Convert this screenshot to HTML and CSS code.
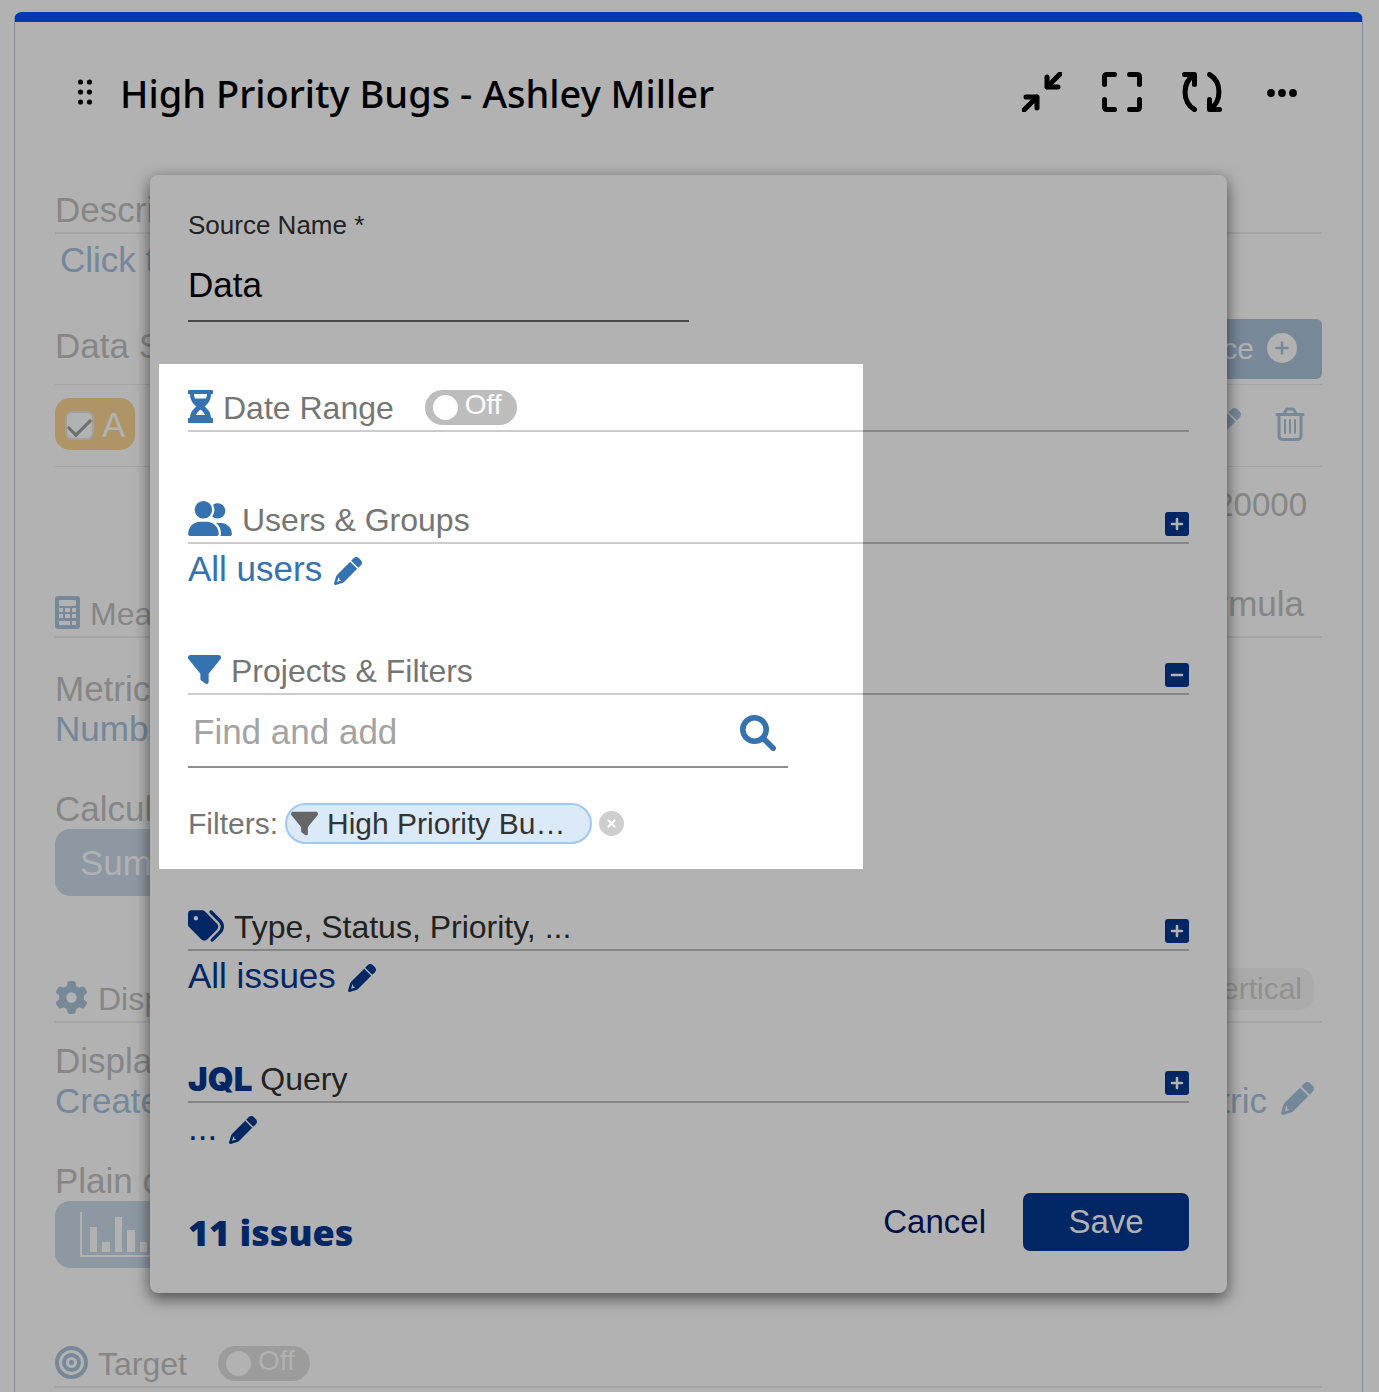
FILE: index.html
```html
<!DOCTYPE html>
<html lang="en">
<head>
<meta charset="utf-8">
<meta name="viewport" content="width=device-width, initial-scale=1">
<title>High Priority Bugs - Ashley Miller</title>
<link rel="stylesheet" href="styles.css">
</head>
<body>
<svg class="sprite" aria-hidden="true">
  <symbol id="pencil" viewBox="0 0 512 512"><path d="M424 216 296 88 58.600 322.900c-10.400 10.400-18 23.300-22.200 37.400L1 480.700c-2.500 8.400-.2 17.500 6.100 23.700s15.300 8.500 23.700 6.100l120.300-35.400c14.100-4.200 27-11.800 37.400-22.200zM132 424l-14 12-54 16-6-6 20-62 14-18 4 44q2 8 10 8zM362.700 18.700 314 67l131 131 48-48.700c25-25 25-65.500 0-90.500l-39.700-40.100c-25-25-65.500-25-90.600 0z"/></symbol>
  <symbol id="filter" viewBox="0 0 512 512"><path d="M3.900 54.900C10.500 40.900 24.500 32 40 32H472c15.500 0 29.500 8.900 36.100 22.900s4.600 30.500-5.200 42.500L320 320.900V448c0 12.100-6.800 23.200-17.700 28.600s-23.800 4.300-33.500-3l-64-48c-8.100-6-12.800-15.500-12.800-25.600V320.900L9 97.300C-.7 85.400-2.800 68.800 3.900 54.900z"/></symbol>
  <symbol id="plus" viewBox="0 0 24 24"><rect width="24" height="24" rx="3"/><path d="M12 7v10M7 12h10" stroke="#b2b2b2" stroke-width="2.600" stroke-linecap="round"/></symbol>
  <symbol id="minus" viewBox="0 0 24 24"><rect width="24" height="24" rx="3"/><path d="M7 12h10" stroke="#b2b2b2" stroke-width="2.600" stroke-linecap="round"/></symbol>
</svg>

<main class="card">
  <header class="card-header">
    <svg class="grip" viewBox="0 0 18 28" aria-hidden="true"><circle cx="5.500" cy="4" r="2.600"/><circle cx="14.500" cy="4" r="2.600"/><circle cx="5.500" cy="14" r="2.600"/><circle cx="14.500" cy="14" r="2.600"/><circle cx="5.500" cy="24" r="2.600"/><circle cx="14.500" cy="24" r="2.600"/></svg>
    <h1>High Priority Bugs - Ashley Miller</h1>
    <div class="tools">
      <button aria-label="Collapse"><svg viewBox="0 0 40 40" class="line"><path d="M38 2 25 15M25 5v10h11M2 38l13-13M4 25h11v11"/></svg></button>
      <button aria-label="Full screen"><svg viewBox="0 0 40 40" class="line"><path d="M2.500 12.500V5q0-2.500 2.500-2.500h7.500M27.500 2.500H35q2.500 0 2.500 2.500v7.500M2.500 27.500V35q0 2.500 2.500 2.500h7.500M27.500 37.500H35q2.500 0 2.500-2.500v-7.500"/></svg></button>
      <button aria-label="Refresh"><svg viewBox="0 0 40 40" class="line"><path d="M2.500 2.500h10v10M12 3C.500 10-.500 30 12.500 37.500M27.500 2.500C40.500 10 39.500 30 28 37M27.500 27.500v10h10"/></svg></button>
      <button aria-label="More"><svg viewBox="0 0 40 40"><circle cx="9" cy="21" r="3.900"/><circle cx="20" cy="21" r="3.900"/><circle cx="31" cy="21" r="3.900"/></svg></button>
    </div>
  </header>

  <section class="description">
    <h2 class="heading large">Description</h2>
    <a class="link-row indent" href="#">Click to add</a>
  </section>

  <section class="sources">
    <div class="sources-head">
      <h2 class="large">Data Sources</h2>
      <button class="add">Add Source <svg viewBox="0 0 30 30" aria-hidden="true"><circle cx="15" cy="15" r="15" fill="#b2b2b2"/><path d="M15 9.500v11M9.500 15h11" stroke="#778899" stroke-width="2.500" stroke-linecap="round"/></svg></button>
    </div>
    <div class="source-row">
      <label class="source-chip"><input type="checkbox" checked>A</label>
      <div class="row-tools">
        <button aria-label="Edit source"><svg class="icon-32"><use href="#pencil"/></svg></button>
        <button aria-label="Delete source"><svg class="trash" viewBox="0 0 30 34"><path class="stroke" d="M2 7.500h26M4 8v20.500q0 4 4 4h14q4 0 4-4V8M9 7l2-4q.5-1 2-1h4q1.500 0 2 1l2 4"/><path class="stroke thin" d="M10 13v13M15 13v13M20 13v13"/></svg></button>
      </div>
    </div>
    <p class="limit">20000</p>
  </section>

  <section class="measure">
    <div class="heading">
      <svg class="calc" viewBox="0 0 25 33" aria-hidden="true"><path fill-rule="evenodd" d="M3 0h19q3 0 3 3v27q0 3-3 3H3q-3 0-3-3V3q0-3 3-3zM4 5v4q0 1 1 1h15q1 0 1-1V5q0-1-1-1H5q-1 0-1 1zM4 12v4h4v-4zm6 0v4h5v-4zm7 0v4h4v-4zM4 18v4h4v-4zm6 0v4h5v-4zm7 0v4h4v-4zM4 25v4h11v-4zm13 0v4h4v-4z"/></svg>
      <h2>Measure</h2><span class="formula">Formula</span>
    </div>
    <div class="fields">
      <div><p class="row">Metric</p><a class="row" href="#">Number</a></div>
      <div><p class="row">Calculation</p><button class="option">Sum</button></div>
    </div>
  </section>

  <section class="display">
    <div class="heading">
      <svg class="icon-33" viewBox="0 0 512 512" aria-hidden="true"><path d="M495.900 166.600c3.200 8.700 .5 18.400-6.400 24.600l-43.300 39.400c1.100 8.300 1.700 16.800 1.700 25.400s-.6 17.100-1.700 25.400l43.300 39.400c6.900 6.200 9.600 15.900 6.400 24.600c-4.400 11.900-9.700 23.300-15.800 34.300l-4.700 8.100c-6.600 11-14 21.400-22.100 31.200c-5.900 7.200-15.700 9.600-24.500 6.800l-55.700-17.700c-13.400 10.300-28.200 18.900-44 25.400l-12.500 57.100c-2 9.100-9 16.300-18.200 17.800c-13.800 2.300-28 3.500-42.500 3.500s-28.700-1.200-42.500-3.500c-9.200-1.500-16.200-8.700-18.200-17.800l-12.500-57.100c-15.800-6.500-30.600-15.100-44-25.400L83.100 425.900c-8.800 2.800-18.600 .3-24.500-6.800c-8.100-9.800-15.500-20.200-22.100-31.200l-4.700-8.100c-6.100-11-11.400-22.400-15.800-34.300c-3.200-8.700-.5-18.400 6.400-24.600l43.300-39.400C64.600 273.100 64 264.600 64 256s.6-17.100 1.700-25.400L22.400 191.200c-6.900-6.200-9.600-15.900-6.400-24.600c4.400-11.900 9.700-23.300 15.800-34.300l4.700-8.100c6.600-11 14-21.400 22.100-31.200c5.900-7.200 15.700-9.600 24.500-6.800l55.700 17.700c13.400-10.300 28.200-18.900 44-25.400l12.500-57.100c2-9.100 9-16.300 18.200-17.800C227.300 1.200 241.500 0 256 0s28.700 1.200 42.500 3.500c9.200 1.500 16.200 8.700 18.200 17.800l12.500 57.100c15.800 6.500 30.600 15.100 44 25.400l55.700-17.700c8.800-2.800 18.600-.3 24.500 6.800c8.100 9.800 15.500 20.200 22.100 31.200l4.700 8.100c6.100 11 11.400 22.400 15.800 34.300zM256 336a80 80 0 1 0 0-160 80 80 0 1 0 0 160z"/></svg>
      <h2>Display</h2><button class="pill">Vertical</button>
    </div>
    <div class="fields">
      <div>
        <p class="row">Display</p>
        <div class="split"><a class="row" href="#">Create</a><a class="row metric" href="#">metric <svg class="icon-33"><use href="#pencil"/></svg></a></div>
      </div>
      <div><p class="row">Plain chart</p><button class="option" aria-label="Bar chart"><svg class="bars" viewBox="0 0 90 46"><path d="M0 0h2v43h88v2H0zM10 15h7v25h-7zM22 30h8v10h-8zM35 5h7v35h-7zM47 18h8v22h-8zM60 30h7v10h-7z"/></svg></button></div>
    </div>
  </section>

  <section class="target">
    <div class="heading">
      <svg class="icon-33" viewBox="0 0 33 33" aria-hidden="true"><g class="stroke rings"><circle cx="16.500" cy="16.500" r="14.500"/><circle cx="16.500" cy="16.500" r="7.500"/></g><circle cx="16.500" cy="16.500" r="2.500"/></svg>
      <h2>Target</h2>
      <label class="toggle"><input type="checkbox" role="switch"><span>Off</span></label>
    </div>
  </section>
</main>

<form class="dialog" role="dialog" aria-label="Edit source">
  <label class="name-label" for="source-name">Source Name *</label>
  <input class="name" id="source-name" type="text" value="Data">

  <div class="focus-area">
    <div class="heading">
      <svg class="hourglass" viewBox="0 0 25 33" aria-hidden="true"><path fill-rule="evenodd" d="M1.500 0h22a1.500 1.500 0 0 1 0 4H23c0 6-3 10-6.500 12.500C20 19 23 23 23 28h.5a1.500 1.500 0 0 1 0 5h-22a1.500 1.500 0 0 1 0-5H2c0-5 3-9 6.500-11.500C5 14 2 10 2 4h-.5a1.500 1.500 0 0 1 0-4zM6 4q0 2.500 1 4.500h11q1-2 1-4.500zM8 25h9q-1.500-3.500-4.500-5.500-3 2-4.500 5.500z"/></svg>
      <h2>Date Range</h2>
      <label class="toggle"><input type="checkbox" role="switch"><span>Off</span></label>
    </div>
    <div class="heading spaced">
      <svg class="group" viewBox="0 0 640 512" aria-hidden="true"><path d="M96 128a128 128 0 1 1 256 0A128 128 0 1 1 96 128zM0 482.300C0 383.800 79.800 304 178.300 304h91.400C368.200 304 448 383.800 448 482.300c0 16.400-13.300 29.700-29.700 29.700H29.700C13.300 512 0 498.700 0 482.300zM609.300 512H471.400c5.400-9.400 8.600-20.300 8.600-32v-8c0-60.700-27.100-115.200-69.800-151.800c2.400-.1 4.700-.2 7.100-.2h61.400C567.800 320 640 392.200 640 481.300c0 17-13.800 30.700-30.700 30.700zM432 256c-31 0-59-12.600-79.300-32.900C372.400 196.500 384 163.600 384 128c0-26.800-6.600-52.100-18.300-74.300C384.300 40.100 407.200 32 432 32c61.900 0 112 50.100 112 112s-50.100 112-112 112z"/></svg>
      <h2>Users &amp; Groups</h2>
      <button type="button" class="expand" aria-label="Expand users"><svg><use href="#plus"/></svg></button>
    </div>
    <a class="edit" href="#">All users <svg><use href="#pencil"/></svg></a>
    <div class="heading projects">
      <svg class="icon-33"><use href="#filter"/></svg>
      <h2>Projects &amp; Filters</h2>
      <button type="button" class="expand" aria-label="Collapse filters"><svg><use href="#minus"/></svg></button>
    </div>
    <div class="search">
      <input type="text" placeholder="Find and add" aria-label="Find and add">
      <button type="button" aria-label="Search"><svg viewBox="0 0 36 36"><g class="stroke lens"><circle cx="14.500" cy="14.500" r="11.700"/><path d="m23.500 23.500 9.700 9.700"/></g></svg></button>
    </div>
    <div class="filters">
      <span class="filters-label">Filters:</span>
      <span class="tag"><svg><use href="#filter"/></svg>High Priority Bu…</span>
      <button type="button" aria-label="Remove filter"><svg viewBox="0 0 25 25"><circle cx="12.500" cy="12.500" r="12.500" fill="#cecece"/><path d="m9.500 9.500 6 6m0-6-6 6" stroke="#fff" stroke-width="2.200" stroke-linecap="round"/></svg></button>
    </div>
  </div>

  <div class="heading type">
    <svg class="tags" viewBox="0 0 512 512" aria-hidden="true"><path d="M345 39.100L472.800 168.400c52.400 53 52.400 138.200 0 191.200L360.800 472.900c-9.300 9.400-24.500 9.500-33.900 .2s-9.500-24.500-.2-33.900L438.600 325.900c33.900-34.300 33.900-89.400 0-123.700L310.900 72.900c-9.300-9.400-9.200-24.600 .2-33.900s24.600-9.200 33.900 .2zM0 229.500V80C0 53.500 21.500 32 48 32H197.500c17 0 33.300 6.700 45.300 18.700l168 168c25 25 25 65.500 0 90.500L277.300 442.700c-25 25-65.500 25-90.500 0l-168-168C6.700 262.700 0 246.500 0 229.500zM144 144a32 32 0 1 0 -64 0 32 32 0 1 0 64 0z"/></svg>
    <h2>Type, Status, Priority, ...</h2>
    <button type="button" class="expand" aria-label="Expand type"><svg><use href="#plus"/></svg></button>
  </div>
  <a class="edit" href="#">All issues <svg><use href="#pencil"/></svg></a>
  <div class="heading query">
    <b class="jql">JQL</b>
    <h2>Query</h2>
    <button type="button" class="expand" aria-label="Expand query"><svg><use href="#plus"/></svg></button>
  </div>
  <a class="edit" href="#">... <svg><use href="#pencil"/></svg></a>

  <footer>
    <strong>11 issues</strong>
    <button type="button" class="cancel">Cancel</button>
    <button type="submit" class="save">Save</button>
  </footer>
</form>
</body>
</html>
```
FILE: styles.css
```css
* { box-sizing: border-box; }
body {
  margin: 0;
  min-height: 100vh;
  display: flex;
  flex-direction: column;
  position: relative;
  padding: 12px 16px 0 14px;
  background: #b2b2b2;
  color: #868686;
  font-family: "Liberation Sans", Arial, sans-serif;
  font-size: 33px;
}
h1, h2, p { margin: 0; font: inherit; }
a { color: inherit; text-decoration: none; }
button { font: inherit; color: inherit; background: none; border: 0; padding: 0; }
svg { display: block; flex: none; fill: currentColor; }
.sprite { position: absolute; width: 0; height: 0; }
.stroke, .line { fill: none; stroke: currentColor; stroke-width: 3; stroke-linecap: round; stroke-linejoin: round; }
.line { stroke-width: 5; }
.thin { stroke-width: 2; }
.rings { stroke-width: 4; }
.lens { stroke-width: 5.600; }
.icon-32 { width: 32px; height: 32px; }
.icon-33 { width: 33px; height: 33px; }

.card {
  flex: 1;
  border: 1px solid #80889a;
  border-top: 10px solid #0037b3;
  border-bottom: 0;
  border-radius: 8px 8px 0 0;
  padding: 0 40px;
}
.card-header { display: flex; align-items: center; height: 140px; padding: 0 20px; color: #000; }
.grip { width: 18px; height: 28px; }
h1 { margin-left: 27px; padding-top: 2px; font: 500 38px "Noto Sans", sans-serif; white-space: nowrap; }
.tools { display: flex; gap: 40px; margin-left: auto; }
.tools svg { width: 40px; height: 40px; }

.heading { display: flex; align-items: center; gap: 10px; height: 46px; border-bottom: 2px solid #a5a5a5; white-space: nowrap; }
.heading h2 { font-size: 32px; }
.heading > svg { margin-bottom: 3px; }
.large, .row, .link-row, .formula { font-size: 35px; }
.card .heading > svg { color: #778899; }
.description { padding-top: 26px; height: 152px; }
.link-row { display: block; line-height: 40px; padding-top: 6px; color: #74879b; }
.indent { padding-left: 5px; }
.sources-head { display: flex; justify-content: space-between; align-items: flex-end; height: 71px; padding-bottom: 5px; border-bottom: 1px solid #a5a5a5; }
.sources-head h2 { line-height: 66px; }
.add { display: flex; align-items: center; gap: 13px; height: 60px; padding: 0 25px; border-radius: 6px; background: #778899; color: #b2b2b2; font-size: 30px; }
.add svg { width: 30px; height: 30px; margin-bottom: 2px; }
.source-row { display: flex; justify-content: space-between; align-items: center; height: 82px; padding: 0 17px 4px 0; border-bottom: 1px solid #a5a5a5; }
.source-chip { display: flex; align-items: center; gap: 8px; width: 80px; height: 52px; padding: 3px 0 0 10px; border-radius: 15px; background: #af9465; color: #b2b2b2; font-size: 35px; }
.source-chip input { appearance: none; display: grid; place-items: center; margin: 0; width: 29px; height: 29px; border: 2px solid #a0a0a4; border-radius: 7px; background: #b2b2b2; }
.source-chip input::after { content: ""; width: 10px; height: 20px; margin-bottom: 6px; border: solid #6f6f6f; border-width: 0 3px 3px 0; transform: rotate(45deg); }
.row-tools { display: flex; align-items: center; gap: 34px; color: #778899; }
.trash { width: 30px; height: 34px; }
.limit { padding: 18px 15px 0 0; line-height: 40px; text-align: right; }
.measure { padding-top: 67px; }
.calc { width: 25px; height: 33px; }
.formula { margin: 0 18px 20px auto; }
.fields { display: grid; gap: 40px; padding-top: 31px; }
.row { display: block; line-height: 40px; }
a.row { color: #74879b; }
.option { display: flex; align-items: center; width: 160px; height: 67px; padding: 0 25px; border-radius: 15px; background: #8d98a3; color: #b2b2b2; font-size: 35px; }
.display { padding-top: 81px; }
.display .fields { padding-top: 18px; }
.pill { height: 42px; margin: 0 8px 20px auto; padding: 0 12px; border-radius: 15px; background: #ababab; color: #909090; font-size: 30px; }
.split { display: flex; justify-content: space-between; }
.metric { display: flex; align-items: center; gap: 14px; padding-right: 8px; }
.metric svg { margin-bottom: 5px; }
.bars { width: 90px; height: 46px; }
.target { padding-top: 74px; }
.toggle { display: flex; align-items: center; gap: 7px; width: 92px; height: 35px; margin: 0 0 2px 21px; padding: 0 8px; border-radius: 18px; background: #bdbdbd; color: #fff; font-size: 28px; line-height: 30px; }
.toggle input { appearance: none; flex: none; margin: 0; width: 25px; height: 25px; border-radius: 50%; background: #fff; }
.toggle span { margin-bottom: 4px; }
.target .toggle { background: #9c9c9c; color: #b2b2b2; }
.target .toggle input { background: #b2b2b2; }

/* Source editor, floating above the card */
.dialog {
  position: absolute;
  top: 175px;
  left: 150px;
  right: 152px;
  padding: 35px 38px 42px;
  border-radius: 8px;
  background: #b2b2b2;
  color: #222;
  box-shadow: 0 5px 16px rgba(0, 0, 0, .6);
}
.name-label { display: block; font-size: 26px; line-height: 30px; }
.name { display: block; width: 50%; height: 72px; margin: 10px 0 42px; padding: 0; border: 0; border-bottom: 2px solid #484848; background: none; color: #000; font: inherit; font-size: 35px; }
.dialog .heading { border-color: #868686; }
.dialog .heading > svg, .edit, .jql, .expand, strong { color: #002664; }
.focus-area { margin-left: -29px; padding: 22px 0 25px 29px; background: linear-gradient(#fff, #fff) no-repeat 0 0 / 704px 100%; color: #757575; }
.dialog .focus-area .heading { border-color: transparent; background: linear-gradient(90deg, #ccc 675px, #868686 675px) no-repeat 0 100% / 100% 2px border-box; }
.dialog .focus-area .heading > svg, .focus-area .edit, .search button { color: #3572b0; }
.hourglass { width: 25px; height: 33px; }
.group { width: 44px; height: 35px; }
.tags { width: 36px; height: 36px; }
.spaced { margin-top: 66px; }
.expand { align-self: flex-end; margin: 0 0 6px auto; }
.expand svg { width: 24px; height: 24px; }
.edit { display: flex; align-items: center; gap: 12px; height: 50px; font-size: 35px; }
.edit svg { width: 28px; height: 28px; margin-top: 3px; }
.projects { margin-top: 55px; }
.query { margin-top: 56px; }
.query h2 { margin-left: -2px; }
.search { display: flex; align-items: center; width: 600px; height: 73px; padding: 2px 12px 0 5px; border-bottom: 2px solid #8e8e8e; }
.search input { flex: 1; min-width: 0; border: 0; padding: 0; background: none; font: inherit; font-size: 35px; }
.search input::placeholder { color: #a3a3a3; opacity: 1; }
.search svg { width: 36px; height: 36px; margin-top: 3px; }
.filters { display: flex; align-items: center; gap: 7px; margin-top: 35px; font-size: 30px; }
.tag { display: flex; align-items: center; gap: 9px; width: 307px; height: 41px; padding-left: 4px; border: 2px solid #a0c8f2; border-radius: 21px; background: #daeaf9; color: #333; white-space: nowrap; }
.tag svg { width: 27px; height: 27px; color: #666; }
.filters button svg { width: 25px; height: 25px; }
.type { margin-top: 36px; }
.jql { font-family: Inter, sans-serif; font-weight: 900; }
footer { display: flex; height: 58px; margin-top: 40px; }
strong { align-self: flex-end; font: 800 36px/36px "Open Sans", sans-serif; }
.cancel { margin: 0 37px 0 auto; color: #001047; }
.save { width: 166px; border-radius: 7px; background: #002664; color: #b2b2b2; }
```
